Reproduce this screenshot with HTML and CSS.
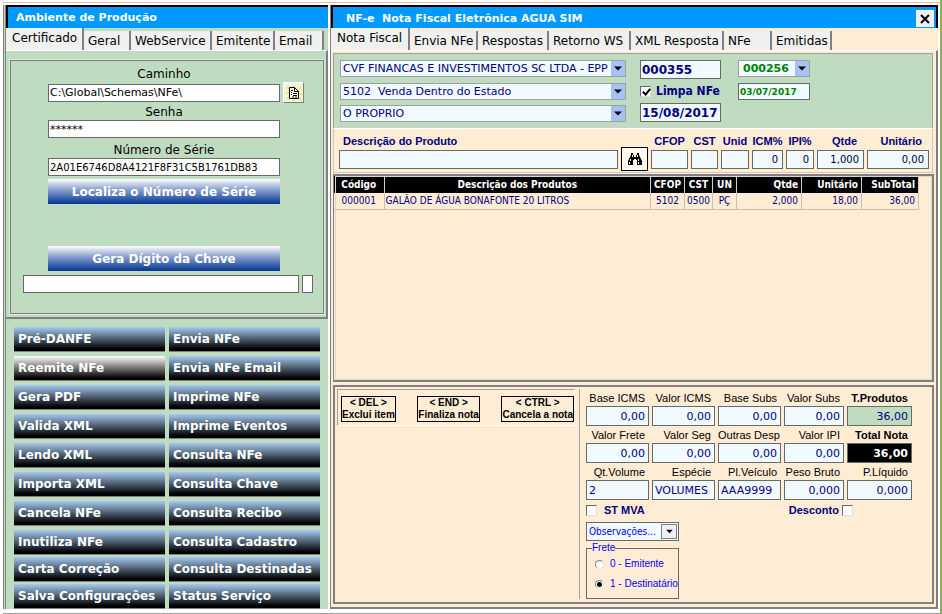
FILE: index.html
```html
<!DOCTYPE html>
<html lang="pt-br">
<head>
  <meta charset="UTF-8">
  <title>NF-e Nota Fiscal Eletrônica</title>
  <link rel="stylesheet" href="styles.css">
</head>
<body>
<div class="desktop">
  <section class="window ambiente">
    <h1 class="titulo">Ambiente de Produção</h1>
    <nav class="abas abas-ambiente">
      <button class="aba ativa">Certificado</button>
      <button class="aba">Geral</button>
      <button class="aba">WebService</button>
      <button class="aba">Emitente</button>
      <button class="aba">Email</button>
    </nav>
    <div class="pagina">
      <form class="certificado">
        <label class="rotulo" for="caminho">Caminho</label>
        <div class="linha-caminho">
          <input class="campo-branco" type="text" id="caminho" value="C:\Global\Schemas\NFe\">
          <button class="botao-pasta" type="button" aria-label="Procurar">
            <svg width="16" height="16" viewBox="0 0 16 16">
              <path d="M1 2l3 3M8 0v3M15 2l-3 3M0 8h3M16 9h-3M1 14l3-3M15 15l-3-3M8 16v-3" stroke="#ffee00" stroke-width="1.5"/>
              <path d="M3.500 2.500h5l4 4v7h-9z" fill="#fff" stroke="#000"/>
              <path d="M8.500 2.500v4h4" fill="none" stroke="#000"/>
              <path d="M5 5.500h2M5 7.500h1M7 8.500h4M5 9.500h1M7 10.500h4M6 12h2M9 12h2" fill="none" stroke="#000"/>
            </svg>
          </button>
        </div>
        <label class="rotulo" for="senha">Senha</label>
        <input class="campo-branco" type="text" id="senha" value="******">
        <label class="rotulo" for="serie">Número de Série</label>
        <input class="campo-branco serie" type="text" id="serie" value="2A01E6746D8A4121F8F31C5B1761DB83">
        <button class="botao-azul" type="button">Localiza o Número de Série</button>
        <button class="botao-azul botao-chave" type="button">Gera Dígito da Chave</button>
        <div class="linha-chave">
          <input class="campo-branco" type="text" aria-label="Chave">
          <input class="campo-branco" type="text" aria-label="Dígito">
        </div>
      </form>
    </div>
    <div class="menu">
      <button class="botao-menu">Pré-DANFE</button>
      <button class="botao-menu">Envia NFe</button>
      <button class="botao-menu cinza">Reemite NFe</button>
      <button class="botao-menu">Envia NFe Email</button>
      <button class="botao-menu">Gera PDF</button>
      <button class="botao-menu">Imprime NFe</button>
      <button class="botao-menu">Valida XML</button>
      <button class="botao-menu">Imprime Eventos</button>
      <button class="botao-menu">Lendo XML</button>
      <button class="botao-menu">Consulta NFe</button>
      <button class="botao-menu">Importa XML</button>
      <button class="botao-menu">Consulta Chave</button>
      <button class="botao-menu">Cancela NFe</button>
      <button class="botao-menu">Consulta Recibo</button>
      <button class="botao-menu">Inutiliza NFe</button>
      <button class="botao-menu">Consulta Cadastro</button>
    </div>
    <div class="menu menu-final">
      <button class="botao-menu">Carta Correção</button>
      <button class="botao-menu">Consulta Destinadas</button>
      <button class="botao-menu">Salva Configurações</button>
      <button class="botao-menu">Status Serviço</button>
    </div>
  </section>

  <section class="window nota">
    <header class="titulo titulo-nota">
      <h1 class="titulo-texto">NF-e&nbsp; Nota Fiscal Eletrônica AGUA SIM</h1>
      <button class="fechar" aria-label="Fechar">
        <svg width="10" height="10" viewBox="0 0 10 10"><path d="M1 1l8 8M9 1l-8 8" stroke="#000" stroke-width="2"/></svg>
      </button>
    </header>
    <nav class="abas abas-nota">
      <button class="aba ativa">Nota Fiscal</button>
      <button class="aba">Envia NFe</button>
      <button class="aba">Respostas</button>
      <button class="aba">Retorno WS</button>
      <button class="aba">XML Resposta</button>
      <button class="aba">NFe</button>
      <button class="aba">Emitidas</button>
    </nav>
    <div class="pagina-nota">
      <div class="cabecalho">
        <div class="coluna">
          <span class="combo">
            <select aria-label="Cliente"><option>CVF FINANCAS E INVESTIMENTOS SC LTDA - EPP</option></select>
            <svg class="seta" viewBox="0 0 14 14"><path d="M3 5h8l-4 4z"/></svg>
          </span>
          <span class="combo">
            <select aria-label="Natureza"><option>5102&nbsp; Venda Dentro do Estado</option></select>
            <svg class="seta" viewBox="0 0 14 14"><path d="M3 5h8l-4 4z"/></svg>
          </span>
          <span class="combo">
            <select aria-label="Transportador"><option>O PROPRIO</option></select>
            <svg class="seta" viewBox="0 0 14 14"><path d="M3 5h8l-4 4z"/></svg>
          </span>
        </div>
        <div class="coluna coluna-numero">
          <input class="campo numero" type="text" aria-label="Número da nota" value="000355">
          <label class="marca limpa"><input type="checkbox" checked> Limpa NFe</label>
          <input class="campo numero" type="text" aria-label="Data" value="15/08/2017">
        </div>
        <div class="coluna coluna-verde">
          <span class="combo verde">
            <select aria-label="Última nota"><option>000256</option></select>
            <svg class="seta" viewBox="0 0 14 14"><path d="M3 5h8l-4 4z"/></svg>
          </span>
          <input class="campo data-verde" type="text" aria-label="Data da última nota" value="03/07/2017">
        </div>
      </div>

      <div class="produto">
        <label class="item item-desc" for="desc">Descrição do Produto</label>
        <span></span>
        <label class="item" for="cfop">CFOP</label>
        <label class="item" for="cst">CST</label>
        <label class="item" for="unid">Unid</label>
        <label class="item" for="icm">ICM%</label>
        <label class="item" for="ipi">IPI%</label>
        <label class="item item-direita" for="qtde">Qtde</label>
        <label class="item item-direita" for="unitario">Unitário</label>
        <input class="campo" type="text" id="desc">
        <button class="buscar" aria-label="Buscar produto">
          <svg width="16" height="14" viewBox="0 0 16 14">
            <path d="M4 1h2v2h1v2h2V3h1V1h2v2l2 4 1 2v4h-5V8H9V7H7v1H6v5H1V9l1-2 2-4z"/>
            <path d="M3.500 7v2M2.500 10v2M11.500 7v2M11.500 10v2M5.500 3v2M10.500 3v2" stroke="#fff"/>
          </svg>
        </button>
        <input class="campo" type="text" id="cfop">
        <input class="campo" type="text" id="cst">
        <input class="campo" type="text" id="unid">
        <input class="campo direita" type="text" id="icm" value="0">
        <input class="campo direita" type="text" id="ipi" value="0">
        <input class="campo direita" type="text" id="qtde" value="1,000">
        <input class="campo direita" type="text" id="unitario" value="0,00">
      </div>

      <div class="grade">
        <table class="tabela">
          <colgroup>
            <col class="c-codigo"><col><col class="c-cfop"><col class="c-cst"><col class="c-un"><col class="c-qtde"><col class="c-unit"><col class="c-sub">
          </colgroup>
          <thead>
            <tr>
              <th>Código</th><th>Descrição dos Produtos</th><th>CFOP</th><th>CST</th><th>UN</th>
              <th class="direita">Qtde</th><th class="direita">Unitário</th><th class="direita">SubTotal</th>
            </tr>
          </thead>
          <tbody>
            <tr>
              <td class="centro">000001</td><td>GALÃO DE ÁGUA BONAFONTE 20 LITROS</td><td class="centro">5102</td><td class="centro">0500</td><td class="centro">PÇ</td>
              <td class="direita">2,000</td><td class="direita">18,00</td><td class="direita">36,00</td>
            </tr>
          </tbody>
        </table>
      </div>

      <div class="rodape">
        <div class="atalhos">
          <button class="atalho">&lt; DEL &gt;<br>Exclui item</button>
          <button class="atalho">&lt; END &gt;<br>Finaliza nota</button>
          <button class="atalho">&lt; CTRL &gt;<br>Cancela a nota</button>
        </div>
        <div class="totais">
          <div class="valores">
            <label class="valor">Base ICMS<input class="campo direita" type="text" value="0,00"></label>
            <label class="valor">Valor ICMS<input class="campo direita" type="text" value="0,00"></label>
            <label class="valor">Base Subs<input class="campo direita" type="text" value="0,00"></label>
            <label class="valor">Valor Subs<input class="campo direita" type="text" value="0,00"></label>
            <label class="valor forte">T.Produtos<input class="campo direita produtos" type="text" value="36,00"></label>
            <label class="valor">Valor Frete<input class="campo direita" type="text" value="0,00"></label>
            <label class="valor">Valor Seg<input class="campo direita" type="text" value="0,00"></label>
            <label class="valor">Outras Desp<input class="campo direita" type="text" value="0,00"></label>
            <label class="valor">Valor IPI<input class="campo direita" type="text" value="0,00"></label>
            <label class="valor forte">Total Nota<input class="campo direita total" type="text" value="36,00"></label>
            <label class="valor">Qt.Volume<input class="campo" type="text" value="2"></label>
            <label class="valor">Espécie<input class="campo" type="text" value="VOLUMES"></label>
            <label class="valor">Pl.Veículo<input class="campo" type="text" value="AAA9999"></label>
            <label class="valor">Peso Bruto<input class="campo direita" type="text" value="0,000"></label>
            <label class="valor">P.Líquido<input class="campo direita" type="text" value="0,000"></label>
          </div>
          <div class="opcoes">
            <label class="marca"><input type="checkbox"> ST MVA</label>
            <label class="marca desconto">Desconto <input type="checkbox"></label>
          </div>
          <span class="combo observacoes">
            <select aria-label="Observações"><option>Observações...</option></select>
            <svg class="seta" viewBox="0 0 14 14"><path d="M4 5h7l-3.500 4z"/></svg>
          </span>
          <fieldset class="frete">
            <legend>Frete</legend>
            <label class="radio"><input type="radio" name="frete"> 0 - Emitente</label>
            <label class="radio"><input type="radio" name="frete" checked> 1 - Destinatário</label>
          </fieldset>
        </div>
      </div>
    </div>
  </section>
</div>
<div class="status"></div>
</body>
</html>
```

FILE: styles.css
```css
* {
  box-sizing: border-box;
}

body {
  margin: 0;
  padding: 2px 0 0 3px;
  min-height: 100vh;
  display: flex;
  flex-direction: column;
  background-color: #fff;
  border-right: 2px solid #8fae5c;
  font-family: Verdana, "DejaVu Sans", sans-serif;
  font-size: 12px;
  color: #000;
}

button, input, select {
  font-family: inherit;
  margin: 0;
  border-radius: 0;
}

button {
  border: none;
  padding: 0;
}

input, select {
  min-width: 0;
}

.desktop {
  flex: 1;
  display: grid;
  grid-template-columns: 325px 1fr;
  gap: 2px;
  border-top: 1px solid #eeb7a6;
  padding: 2px 2px 0 0;
}

.window {
  display: flex;
  flex-direction: column;
  border-left: 1px solid #808080;
}

/* Barra de titulo */
.titulo {
  margin: 0;
  height: 23px;
  line-height: 22px;
  padding-left: 8px;
  background-color: #0099ff;
  border-top: 2px solid #000;
  border-left: 2px solid #000;
  color: #fff;
  font-size: 11px;
  font-weight: bold;
}

.titulo-nota {
  display: flex;
  justify-content: space-between;
  align-items: center;
  padding: 2px 2px 0 13px;
  border-right: 2px solid #000;
}

.titulo-texto {
  margin: 0;
  font-size: 11px;
}

.fechar {
  display: flex;
  align-items: center;
  justify-content: center;
  width: 18px;
  height: 17px;
  background-color: #f0f0f0;
}

/* Abas */
.abas {
  display: grid;
  align-items: end;
  height: 22px;
}

.abas-ambiente {
  grid-template-columns: 78px 47px 81px 63px 49px;
}

.abas-nota {
  grid-template-columns: 79px 68px 71px 82px 93px 48px 60px;
}

.aba {
  height: 19px;
  padding: 0 0 0 4px;
  background-color: #f0f0f0;
  border-right: 2px solid #808080;
  font-size: 12px;
  text-align: left;
  white-space: nowrap;
  color: #000;
}

.aba.ativa {
  height: 22px;
  padding: 0 0 3px 6px;
}

/* Janela da esquerda */
.ambiente {
  background-color: #c0dcc0;
  border-left: 3px double #808080;
}

.pagina {
  padding: 9px 2px 3px 4px;
  border-top: 1px solid #fff;
  border-right: 2px solid #808080;
  border-bottom: 2px solid #808080;
}

.certificado {
  display: flex;
  flex-direction: column;
  padding: 5px 43px 20px 37px;
  border: 1px solid #808080;
  outline: 1px solid #d8ecd8;
}

.rotulo {
  height: 16px;
  line-height: 16px;
  margin-top: 4px;
  text-align: center;
}

.certificado > .rotulo:first-child {
  margin-top: 0;
}

.campo-branco {
  width: 100%;
  height: 18px;
  padding: 0 1px;
  background-color: #fff;
  border: 1px solid #696969;
  font-size: 11px;
  color: #000;
}

.campo-branco.serie {
  font-size: 10px;
}

.linha-caminho {
  display: grid;
  grid-template-columns: 100% 21px;
  column-gap: 3px;
  align-items: center;
  height: 18px;
}

.botao-pasta {
  display: flex;
  align-items: center;
  justify-content: center;
  height: 21px;
  background-color: #f0f0f0;
  border: 1px solid #fff;
  border-right-color: #808080;
  border-bottom-color: #808080;
}

.botao-azul {
  height: 25px;
  margin-top: 3px;
  background-image: linear-gradient(#fff, #8fa5d0 40%, #0b3a96 96%);
  color: #fff;
  font-size: 12px;
  font-weight: bold;
}

.botao-chave {
  margin-top: 42px;
}

.linha-chave {
  display: grid;
  grid-template-columns: 1fr 11px;
  gap: 3px;
  margin: 4px -33px 0 -25px;
}

.menu {
  display: grid;
  grid-template-columns: 1fr 1fr;
  gap: 4px;
  padding: 8px 8px 0;
}

.menu-final {
  row-gap: 2px;
  padding-top: 2px;
}

.botao-menu {
  height: 25px;
  padding: 0 4px;
  background-image: linear-gradient(#a6caf0, #000 92%);
  border-bottom: 1px solid #808080;
  color: #fff;
  font-size: 12px;
  font-weight: bold;
  text-align: left;
  white-space: nowrap;
}

.botao-menu.cinza {
  background-image: linear-gradient(#fff, #000 92%);
}

/* Janela da nota */
.nota {
  background-color: #ffecd4;
}

.pagina-nota {
  flex: 1;
  display: flex;
  flex-direction: column;
  padding: 2px 2px 3px 2px;
  border-top: 1px solid #fff;
  border-right: 2px solid #808080;
  border-bottom: 2px solid #808080;
}

.cabecalho {
  display: flex;
  gap: 14px;
  padding: 6px 5px 5px 6px;
  margin-right: 1px;
  background-color: #c0dcc0;
  border: 1px solid #a0a0a0;
  border-bottom-color: #d0d0d0;
}

.coluna {
  display: flex;
  flex-direction: column;
  justify-content: space-between;
  height: 62px;
  width: 286px;
}

.coluna-numero {
  width: 81px;
}

.coluna-verde {
  width: 72px;
  margin-left: 3px;
  justify-content: flex-start;
  gap: 6px;
}

/* Lista com a seta por cima do select */
.combo {
  display: grid;
  align-items: center;
  height: 17px;
}

.combo select {
  grid-area: 1 / 1;
  appearance: none;
  width: 100%;
  height: 100%;
  padding: 0 2px;
  background-color: #f0faff;
  border: 1px solid #a0a0a0;
  color: #000080;
  font-size: 11px;
}

.seta {
  grid-area: 1 / 1;
  justify-self: end;
  width: 14px;
  height: 15px;
  margin-right: 1px;
  background-color: #a6c2f5;
  pointer-events: none;
}

.verde select {
  padding-left: 4px;
  color: #008000;
  font-weight: bold;
}

.campo {
  width: 100%;
  height: 20px;
  padding: 0 2px;
  background-color: #f0faff;
  border: 1px solid #696969;
  color: #000080;
  font-family: Verdana, "DejaVu Sans", sans-serif;
  font-size: 11px;
}

.campo.numero {
  height: 19px;
  padding: 0 1px;
  font-size: 12px;
  font-weight: bold;
}

.campo.data-verde {
  height: 17px;
  padding: 0 1px;
  color: #008000;
  font-size: 9px;
  font-weight: bold;
}

.marca {
  display: flex;
  align-items: center;
  gap: 7px;
  font-family: Arial, "Liberation Sans", sans-serif;
  font-size: 11px;
  font-weight: bold;
  color: #000080;
  white-space: nowrap;
}

.marca.limpa {
  gap: 5px;
  font-size: 12px;
  font-family: Tahoma, "DejaVu Sans Condensed", sans-serif;
}

.marca input {
  appearance: none;
  width: 11px;
  height: 11px;
  background-color: #fff;
  border: 1px solid #696969;
  border-right-color: #e0e0e0;
  border-bottom-color: #e0e0e0;
}

.marca input:checked::before {
  content: "";
  display: block;
  width: 3px;
  height: 6px;
  margin-left: 3px;
  border: solid #000;
  border-width: 0 2px 2px 0;
  transform: rotate(40deg);
}

.direita {
  text-align: right;
}

.centro {
  text-align: center;
}

.produto {
  display: grid;
  grid-template-columns: 1fr 27px 37px 27px 28px 31px 28px 47px 62px;
  grid-template-rows: 13px 24px;
  column-gap: 3px;
  align-items: center;
  margin-right: 1px;
  padding: 5px 3px 1px 5px;
  border: 1px solid #d0c8bc;
  border-top-color: #fff;
}

.item {
  font-family: Arial, "Liberation Sans", sans-serif;
  font-size: 11px;
  font-weight: bold;
  color: #000080;
  text-align: center;
  white-space: nowrap;
}

.item-desc {
  padding-left: 4px;
  text-align: left;
}

.item-direita {
  padding-right: 7px;
  text-align: right;
}

.produto .campo {
  height: 19px;
  padding-right: 4px;
  font-size: 10px;
  color: #000040;
}

.buscar {
  display: flex;
  align-items: center;
  justify-content: center;
  height: 24px;
  background-color: #fffaf0;
  border: 1px solid #000;
}

.grade {
  flex: 1;
  margin-top: 1px;
  padding-right: 13px;
  border: 2px solid #808080;
  border-left-width: 1px;
  outline: 1px solid #d8d8d8;
  outline-offset: -3px;
}

.tabela {
  width: 100%;
  table-layout: fixed;
  border-collapse: collapse;
  font-family: Tahoma, "DejaVu Sans Condensed", sans-serif;
  font-size: 10px;
  color: #000080;
}

.c-codigo { width: 50px; }
.c-cfop { width: 34px; }
.c-cst { width: 28px; }
.c-un { width: 24px; }
.c-qtde { width: 65px; }
.c-unit { width: 60px; }
.c-sub { width: 57px; }

.tabela th {
  height: 17px;
  padding: 0 3px;
  background-color: #000;
  border-right: 1px solid #d0d0d0;
  color: #fff;
  white-space: nowrap;
}

.tabela td {
  height: 16px;
  padding: 0 3px 0 1px;
  border-right: 1px solid #c8c0b4;
  border-bottom: 1px solid #c8c0b4;
  white-space: nowrap;
}

.tabela td.centro {
  padding: 0;
}

.rodape {
  display: grid;
  grid-template-columns: 1fr 352px;
  margin-top: 3px;
  padding: 2px 1px 3px 2px;
  border: 2px solid #808080;
  font-family: Arial, "Liberation Sans", sans-serif;
}

.atalhos {
  display: flex;
  justify-content: space-between;
  align-self: start;
  margin-right: 4px;
  padding: 6px 0 3px 3px;
  border: 1px solid #a8a098;
  border-right-color: #fff;
  border-bottom-color: #fff;
}

.atalho {
  height: 26px;
  background-color: transparent;
  border: 1px solid #000;
  font-size: 10px;
  font-weight: bold;
  line-height: 12px;
  color: #000;
}

.totais {
  padding: 1px 18px 0 6px;
  border-left: 1px solid #a0a0a0;
}

.valores {
  display: grid;
  grid-template-columns: 63px 63px 63px 60px 65px;
  column-gap: 3px;
}

.valor {
  display: flex;
  flex-direction: column;
  height: 37px;
  padding-right: 4px;
  font-size: 11px;
  line-height: 16px;
  text-align: right;
  white-space: nowrap;
}

.valor .campo {
  width: auto;
  margin-right: -4px;
  padding-right: 3px;
}

.valor.forte {
  font-weight: bold;
}

.campo.produtos {
  background-color: #c0dcc0;
}

.campo.total {
  background-color: #000;
  color: #fff;
  font-weight: bold;
}

.opcoes {
  display: flex;
  gap: 144px;
  margin: 3px 0 6px;
}

.desconto {
  gap: 3px;
}

.observacoes {
  width: 93px;
  height: 19px;
}

.observacoes select {
  border-color: #696969;
  color: #0000ff;
  font-family: Tahoma, "DejaVu Sans Condensed", sans-serif;
  font-size: 10px;
}

.observacoes .seta {
  width: 16px;
  margin-right: 2px;
  background-color: #f0f0f0;
  border: 1px solid #808080;
}

.frete {
  display: flex;
  flex-direction: column;
  gap: 8px;
  width: 93px;
  margin: 1px 0 0;
  padding: 4px 0 8px 8px;
  border: 1px solid #696969;
  color: #0000ff;
  font-size: 10px;
  line-height: 12px;
}

.frete legend {
  margin-left: -3px;
  padding: 0;
}

.radio {
  display: flex;
  align-items: center;
  gap: 6px;
  white-space: nowrap;
}

.radio input {
  appearance: none;
  width: 9px;
  height: 9px;
  margin: 0;
  background-color: #fff;
  border: 1px solid #808080;
  border-right-color: #e0e0e0;
  border-bottom-color: #e0e0e0;
  border-radius: 50%;
}

.radio input:checked {
  background-image: radial-gradient(#000 2px, #fff 3px);
}

.status {
  height: 5px;
  border-bottom: 1px solid #a0a0a0;
  margin-bottom: 1px;
}
```
